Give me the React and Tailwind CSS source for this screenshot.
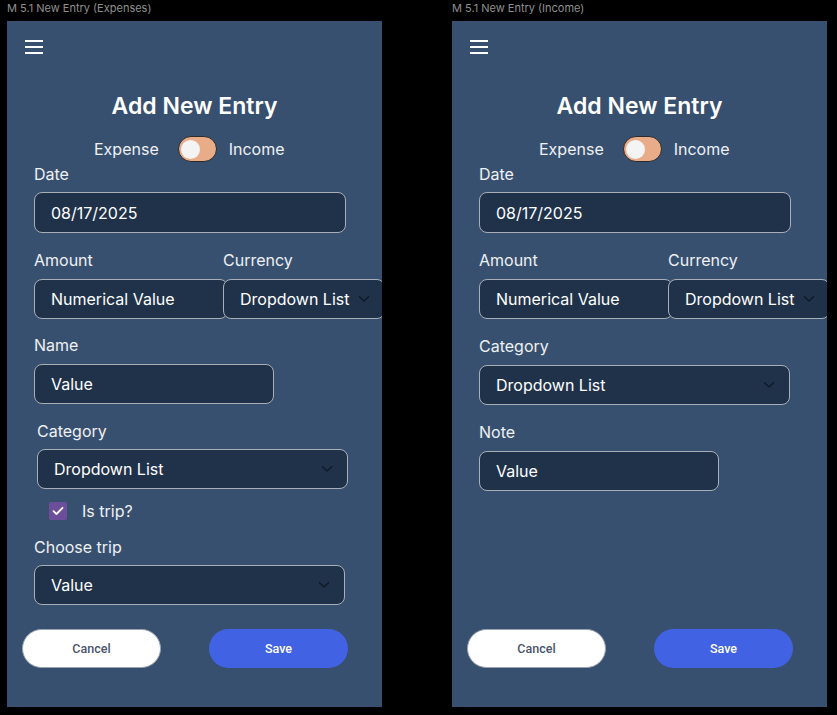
import React from "react";

const font = { fontFamily: "Inter, 'Noto Sans', sans-serif" };

function Chevron() {
  return (
    <svg width="12" height="8" viewBox="0 0 12 8" fill="none">
      <path d="M1.5 1.8 L6 6 L10.5 1.8" stroke="#0e1826" strokeWidth="1.3" strokeLinecap="round" strokeLinejoin="round" />
    </svg>
  );
}

function Label({ children, className = "" }) {
  return <div className={`h-[20px] leading-[20px] text-[16px] text-[#eef1f5] ${className}`}>{children}</div>;
}

function Field({ children, className = "", chevron = false }) {
  return (
    <div className={`relative shrink-0 h-[40px] rounded-[8px] border border-[#a9afb7] bg-[#20324a] flex items-center pl-[16px] text-[16px] text-white ${className}`}>
      <span>{children}</span>
      {chevron && (
        <span className="absolute top-1/2 -translate-y-1/2 right-[14px] flex">
          <Chevron />
        </span>
      )}
    </div>
  );
}

function Hamburger() {
  return (
    <div className="mt-[19px] ml-[18px] flex flex-col gap-[4px] w-[18px]">
      <div className="h-[2px] w-[18px] bg-white" />
      <div className="h-[2px] w-[18px] bg-white" />
      <div className="h-[2px] w-[18px] bg-white" />
    </div>
  );
}

function Top() {
  return (
    <>
      <Hamburger />
      <div className="mt-[36px] h-[32px] leading-[32px] text-center text-[23px] font-semibold text-white">Add New Entry</div>
      <div className="mt-[14px] ml-[87px] h-[26px] flex items-center text-[16px] text-[#eef1f5]">
        <span>Expense</span>
        <div className="ml-[19px] w-[39px] h-[26px] rounded-full bg-[#e8ac88] border border-[#2b2b2b] flex items-center pl-[2px]">
          <div className="w-[19px] h-[19px] rounded-full bg-[#f4f4f4]" />
        </div>
        <span className="ml-[12px]">Income</span>
      </div>
      <Label className="mt-[2px] ml-[27px]">Date</Label>
      <Field className="mt-[8px] ml-[27px] w-[312px] h-[41px]">08/17/2025</Field>
      <div className="mt-[17px] flex h-[20px]">
        <Label className="ml-[27px] w-[189px]">Amount</Label>
        <Label>Currency</Label>
      </div>
      <div className="mt-[9px] flex h-[40px]">
        <Field className="ml-[27px] w-[194px]">Numerical Value</Field>
        <Field className="ml-[-5px] w-[162px]" chevron>Dropdown List</Field>
      </div>
    </>
  );
}

function Buttons() {
  return (
    <div className="mt-auto mb-[39px] ml-[15px] flex gap-[48px]" style={{ fontFamily: "Roboto, sans-serif" }}>
      <div className="w-[139px] h-[39px] rounded-full bg-white border border-[#9ba3b0] flex items-center justify-center pt-[2px] text-[12.5px] font-medium text-[#4a5570]">Cancel</div>
      <div className="w-[139px] h-[39px] rounded-full bg-[#4162e3] flex items-center justify-center pt-[2px] text-[12.5px] font-medium text-white">Save</div>
    </div>
  );
}

function ExpenseFrame() {
  return (
    <div className="w-[375px] h-[686px] bg-[#38506f] flex flex-col overflow-hidden" style={font}>
      <Top />
      <Label className="mt-[16px] ml-[27px]">Name</Label>
      <Field className="mt-[9px] ml-[27px] w-[240px]">Value</Field>
      <Label className="mt-[17px] ml-[30px]">Category</Label>
      <Field className="mt-[8px] ml-[30px] w-[311px]" chevron>Dropdown List</Field>
      <div className="mt-[13px] ml-[42px] h-[18px] flex items-center">
        <div className="w-[18px] h-[18px] rounded-[2px] bg-[#6d4e9a] flex items-center justify-center">
          <svg width="12" height="10" viewBox="0 0 12 10" fill="none">
            <path d="M1.5 5.2 L4.5 8 L10.5 1.8" stroke="white" strokeWidth="1.8" strokeLinecap="round" strokeLinejoin="round" />
          </svg>
        </div>
        <span className="ml-[15px] text-[16px] text-[#eef1f5]">Is trip?</span>
      </div>
      <Label className="mt-[17px] ml-[27px]">Choose trip</Label>
      <Field className="mt-[8px] ml-[27px] w-[311px]" chevron>Value</Field>
      <Buttons />
    </div>
  );
}

function IncomeFrame() {
  return (
    <div className="w-[375px] h-[686px] bg-[#38506f] flex flex-col overflow-hidden" style={font}>
      <Top />
      <Label className="mt-[17px] ml-[27px]">Category</Label>
      <Field className="mt-[9px] ml-[27px] w-[311px]" chevron>Dropdown List</Field>
      <Label className="mt-[17px] ml-[27px]">Note</Label>
      <Field className="mt-[9px] ml-[27px] w-[240px]">Value</Field>
      <Buttons />
    </div>
  );
}

export default function App() {
  return (
    <div className="w-[837px] h-[715px] bg-black flex pl-[7px] gap-[70px] overflow-hidden">
      <div className="flex flex-col">
        <div className="h-[21px] leading-[16px] text-[11px] text-[#8f8f8f]" style={font}>M 5.1 New Entry (Expenses)</div>
        <ExpenseFrame />
      </div>
      <div className="flex flex-col">
        <div className="h-[21px] leading-[16px] text-[11px] text-[#8f8f8f]" style={font}>M 5.1 New Entry (Income)</div>
        <IncomeFrame />
      </div>
    </div>
  );
}
